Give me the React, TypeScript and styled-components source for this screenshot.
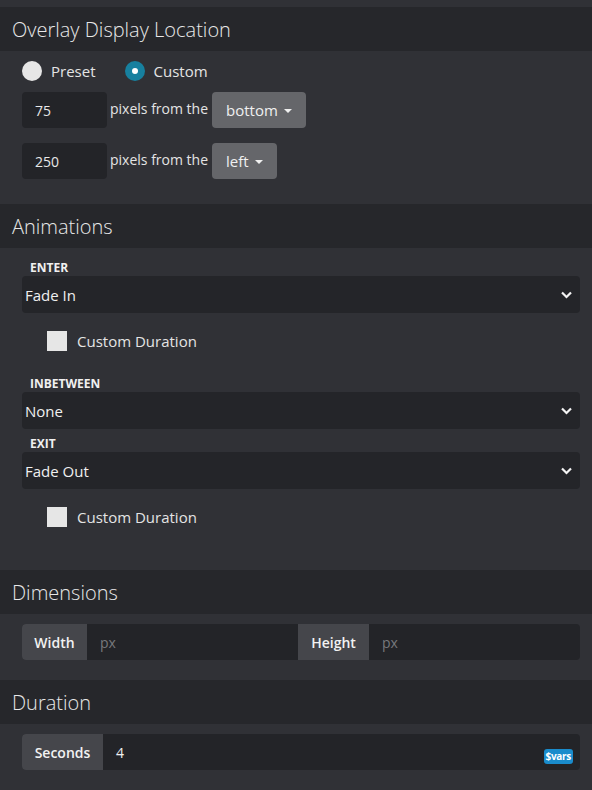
import React from 'react';
import styled, { createGlobalStyle } from 'styled-components';

const GlobalStyle = createGlobalStyle`
  body {
    margin: 0;
    background: #303136;
    font-family: "Open Sans", "Noto Sans", sans-serif;
    color: #e4e4e4;
  }
`

const Page = styled.div`
  padding-top: 7px;
  width: 592px;
`

const SectionHeader = styled.div`
  height: 44px;
  display: flex;
  align-items: center;
  padding-left: 12px;
  background: #26272b;
  font-size: 20px;
  font-weight: 300;
  color: #e8e8e8;
`

const SectionBody = styled.div<{ $pt: number; $pb: number }>`
  padding: ${p => p.$pt}px 12px ${p => p.$pb}px 22px;
  display: flex;
  flex-direction: column;
`

const RadioRow = styled.div`
  display: flex;
  align-items: center;
  height: 20px;
  margin-bottom: 11px;
`

const RadioOption = styled.label`
  display: flex;
  align-items: center;
  gap: 9px;
  font-size: 15px;
  margin-right: 29px;
`

const RadioDot = styled.span<{ $checked?: boolean }>`
  width: 20px;
  height: 20px;
  border-radius: 50%;
  background: ${p => (p.$checked ? '#17809f' : '#e6e6e6')};
  display: flex;
  align-items: center;
  justify-content: center;
  &::after {
    content: '';
    width: 6px;
    height: 6px;
    border-radius: 50%;
    background: ${p => (p.$checked ? '#fff' : 'transparent')};
  }
`

const OffsetRow = styled.div<{ $mb?: number }>`
  display: flex;
  align-items: center;
  height: 36px;
  margin-bottom: ${p => p.$mb ?? 0}px;
`

const NumberBox = styled.div`
  width: 85px;
  height: 36px;
  box-sizing: border-box;
  padding-left: 13px;
  display: flex;
  align-items: center;
  background: #232428;
  border-radius: 4px;
  font-size: 14px;
  color: #e8e8e8;
`

const InlineText = styled.span`
  font-size: 14px;
  margin: 0 4px 0 3px;
  padding-bottom: 4px;
`

const DropButton = styled.div`
  height: 36px;
  box-sizing: border-box;
  padding: 0 14px 0 14px;
  display: flex;
  align-items: center;
  gap: 6px;
  background: #65666a;
  border-radius: 4px;
  font-size: 15px;
  color: #f0f0f0;
`

const Caret = styled.span`
  width: 0;
  height: 0;
  border-left: 4px solid transparent;
  border-right: 4px solid transparent;
  border-top: 4px solid #f0f0f0;
  margin-top: 2px;
`

const FieldLabel = styled.div<{ $mt: number }>`
  font-size: 12px;
  font-weight: 700;
  line-height: 16px;
  padding-left: 8px;
  margin-top: ${p => p.$mt}px;
  color: #f0f0f0;
`

const SelectBox = styled.div`
  height: 37px;
  box-sizing: border-box;
  padding: 0 8px 0 3px;
  display: flex;
  align-items: center;
  justify-content: space-between;
  background: #242529;
  border-radius: 4px;
  font-size: 15px;
  color: #f0f0f0;
`

const CheckRow = styled.label<{ $mt: number }>`
  display: flex;
  align-items: center;
  gap: 10px;
  height: 20px;
  margin-top: ${p => p.$mt}px;
  padding-left: 25px;
  font-size: 15px;
`

const CheckSquare = styled.span`
  width: 20px;
  height: 20px;
  background: #e6e6e6;
`

const InputGroup = styled.div`
  display: flex;
  height: 36px;
  border-radius: 4px;
  overflow: hidden;
  background: #232428;
`

const Addon = styled.div<{ $w: number }>`
  width: ${p => p.$w}px;
  flex: none;
  display: flex;
  align-items: center;
  justify-content: center;
  background: #45464b;
  font-size: 14px;
  font-weight: 600;
  color: #f2f2f2;
`

const Field = styled.div<{ $placeholder?: boolean }>`
  flex: 1;
  display: flex;
  align-items: center;
  justify-content: space-between;
  padding: 0 7px 0 13px;
  font-size: 14px;
  color: ${p => (p.$placeholder ? '#77787c' : '#f0f0f0')};
`

const VarsBadge = styled.span`
  background: #1a8ccc;
  color: #fff;
  font-size: 10px;
  font-weight: 700;
  line-height: 15px;
  height: 15px;
  padding: 0 2px;
  border-radius: 3px;
  letter-spacing: -0.3px;
  margin-top: 8px;
`

const Chevron = () => (
  <svg width="11" height="8" viewBox="0 0 11 8">
    <path d="M1 1.5 L5.5 6 L10 1.5" fill="none" stroke="#f4f4f4" strokeWidth="2.2" />
  </svg>
)

const Select = ({ value }: { value: string }) => (
  <SelectBox>
    <span>{value}</span>
    <Chevron />
  </SelectBox>
)

const App = () => (
  <Page>
    <GlobalStyle />
    <SectionHeader>Overlay Display Location</SectionHeader>
    <SectionBody $pt={10} $pb={25}>
      <RadioRow>
        <RadioOption><RadioDot />Preset</RadioOption>
        <RadioOption><RadioDot $checked />Custom</RadioOption>
      </RadioRow>
      <OffsetRow $mb={15}>
        <NumberBox>75</NumberBox>
        <InlineText>pixels from the</InlineText>
        <DropButton>bottom<Caret /></DropButton>
      </OffsetRow>
      <OffsetRow>
        <NumberBox>250</NumberBox>
        <InlineText>pixels from the</InlineText>
        <DropButton>left<Caret /></DropButton>
      </OffsetRow>
    </SectionBody>

    <SectionHeader>Animations</SectionHeader>
    <SectionBody $pt={0} $pb={43}>
      <FieldLabel $mt={12}>ENTER</FieldLabel>
      <Select value="Fade In" />
      <CheckRow $mt={18}><CheckSquare />Custom Duration</CheckRow>
      <FieldLabel $mt={25}>INBETWEEN</FieldLabel>
      <Select value="None" />
      <FieldLabel $mt={7}>EXIT</FieldLabel>
      <Select value="Fade Out" />
      <CheckRow $mt={18}><CheckSquare />Custom Duration</CheckRow>
    </SectionBody>

    <SectionHeader>Dimensions</SectionHeader>
    <SectionBody $pt={10} $pb={20}>
      <InputGroup>
        <Addon $w={65}>Width</Addon>
        <Field $placeholder>px</Field>
        <Addon $w={71}>Height</Addon>
        <Field $placeholder>px</Field>
      </InputGroup>
    </SectionBody>

    <SectionHeader>Duration</SectionHeader>
    <SectionBody $pt={10} $pb={20}>
      <InputGroup>
        <Addon $w={81}>Seconds</Addon>
        <Field>
          <span>4</span>
          <VarsBadge>$vars</VarsBadge>
        </Field>
      </InputGroup>
    </SectionBody>
  </Page>
)

export default App;
